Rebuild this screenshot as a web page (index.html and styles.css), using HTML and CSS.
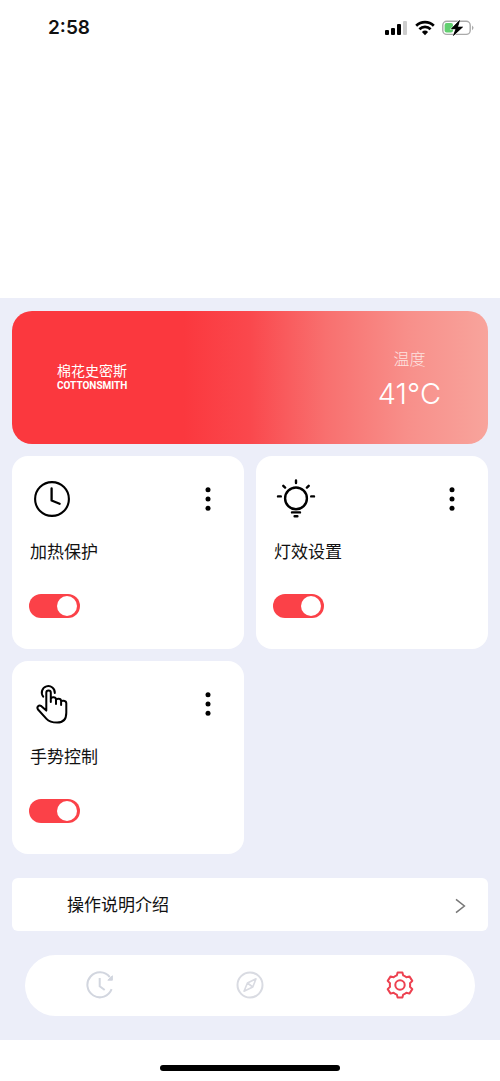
FILE: index.html
```html
<!DOCTYPE html>
<html lang="zh-CN">
<head>
<meta charset="utf-8">
<meta name="viewport" content="width=device-width, initial-scale=1">
<title>棉花史密斯</title>
<link rel="stylesheet" href="styles.css">
</head>
<body>
<header class="status">
  <time class="clock">2:58</time>
  <div class="indicators">
    <svg width="23" height="16" viewBox="0 0 23 16" aria-hidden="true"><rect x="0" y="10" width="4" height="5" rx="1"/><rect x="6" y="8" width="4" height="7" rx="1"/><rect x="12" y="4" width="4" height="11" rx="1"/><rect x="18" y="1" width="4" height="14" rx="1" fill="#ccc"/></svg>
    <svg width="20" height="16" viewBox="0 0 20 16" aria-hidden="true"><g fill="none" stroke="#000" stroke-width="2.7"><path d="M1.2 5.8a12.6 12.6 0 0 1 17.6 0"/><path d="M4.4 9.2a8 8 0 0 1 11.2 0"/></g><path d="M10 15.2l-3.1-3.3a4.5 4.5 0 0 1 6.2 0z"/></svg>
    <svg width="32" height="16" viewBox="0 0 32 16" aria-hidden="true"><rect x=".8" y="1.2" width="27.4" height="13.2" rx="4" fill="#fff" stroke="#aaa" stroke-width="1.4"/><path d="M30 5.4q3 2.4 0 4.8z" fill="#aaa"/><rect x="2.6" y="3" width="8.4" height="9.6" rx="2" fill="#62cf70"/><path d="M17.6.4L9.4 8.8h4.6l-2.6 6.8 9.2-8.6h-5z" stroke="#fff" stroke-width="1.4" paint-order="stroke"/><path d="M17.6.4L9.4 8.8h4.6l-2.6 6.8 9.2-8.6h-5z" stroke="#000" stroke-width=".6"/></svg>
  </div>
</header>

<main class="panel">
  <section class="hero">
    <div class="brand">
      <span class="brand-cn">棉花史密斯</span>
      <span class="brand-en">COTTONSMITH</span>
    </div>
    <div class="temp">
      <span class="temp-label">温度</span>
      <span class="temp-value">41°C</span>
    </div>
  </section>

  <section class="cards">
    <article class="card">
      <div class="card-top">
        <svg width="44" height="44" viewBox="0 0 44 44" fill="none" stroke="#000" aria-hidden="true"><circle cx="23" cy="22" r="16.9" stroke-width="2.1"/><path d="M22.6 11.5v12l8 3.2" stroke-width="2.3" stroke-linecap="round" stroke-linejoin="round"/></svg>
        <button class="more" type="button" aria-label="更多"><svg width="6" height="24" viewBox="0 0 6 24"><circle cx="3" cy="2.7" r="2.5"/><circle cx="3" cy="12" r="2.5"/><circle cx="3" cy="21.3" r="2.5"/></svg></button>
      </div>
      <label class="card-name" for="heat">加热保护</label>
      <input class="switch" id="heat" type="checkbox" role="switch" checked>
    </article>
    <article class="card">
      <div class="card-top">
        <svg width="44" height="44" viewBox="0 0 44 44" fill="none" stroke="#000" stroke-width="2.4" stroke-linecap="round" aria-hidden="true"><circle cx="23" cy="21.4" r="10.9"/><path d="M23 3.4v2.6M10.3 8.8l1.8 1.8M35.7 8.8l-1.8 1.8M5 19.4h2.8M38.2 19.4H41M19 35.4h8M21.6 39.2h2.8"/></svg>
        <button class="more" type="button" aria-label="更多"><svg width="6" height="24" viewBox="0 0 6 24"><circle cx="3" cy="2.7" r="2.5"/><circle cx="3" cy="12" r="2.5"/><circle cx="3" cy="21.3" r="2.5"/></svg></button>
      </div>
      <label class="card-name" for="light">灯效设置</label>
      <input class="switch" id="light" type="checkbox" role="switch" checked>
    </article>
    <article class="card">
      <div class="card-top">
        <svg width="44" height="44" viewBox="0 0 44 44" fill="none" stroke="#000" stroke-width="2" stroke-linecap="round" stroke-linejoin="round" aria-hidden="true"><path d="M14.2 14.6a6.5 6.5 0 1 1 11.6-3.6"/><path d="M17.3 28V10.8a2.2 2.2 0 0 1 4.5 0V20M21.8 17c.2-2.4 5-2.4 5.2.4V22M27 18.2c.3-2 4.9-2 5.1.6V23M32.1 19.8c.4-1.6 5-1.4 5.2 1.4v9.5c0 6.5-3.4 9.9-9.2 9.9-5 0-8.1-.9-10.6-3.7L9 27.5c-1.7-2.7.8-5 3.4-3.3l4.9 4.4"/></svg>
        <button class="more" type="button" aria-label="更多"><svg width="6" height="24" viewBox="0 0 6 24"><circle cx="3" cy="2.7" r="2.5"/><circle cx="3" cy="12" r="2.5"/><circle cx="3" cy="21.3" r="2.5"/></svg></button>
      </div>
      <label class="card-name" for="gesture">手势控制</label>
      <input class="switch" id="gesture" type="checkbox" role="switch" checked>
    </article>
  </section>

  <a class="guide" href="#guide">操作说明介绍
    <svg width="11" height="16" viewBox="0 0 11 16" fill="none" stroke="#777" stroke-width="1.5" aria-hidden="true"><path d="M1 1.4L9.4 8 1 14.6"/></svg>
  </a>

  <nav class="tabs">
    <a class="tab" href="#timer" aria-label="定时"><svg width="28" height="28" viewBox="0 0 28 28" fill="none" stroke="#d2d6df" stroke-width="2"><path d="M25.6 18.2A12.5 12.5 0 1 1 23.8 6.2"/><path d="M26.4 4.8v4.4h-4.6z" fill="#d2d6df" stroke-width="1"/><path d="M13.7 7v8.2l5 3.8"/></svg></a>
    <a class="tab" href="#explore" aria-label="探索"><svg width="28" height="28" viewBox="0 0 28 28" fill="none" stroke="#d9dbe2" stroke-width="2"><circle cx="14" cy="14" r="12.5"/><path d="M20 7.8L16.8 16 8 20.2 11.4 12zM11.4 12l5.4 4" stroke-width="1.6" stroke-linejoin="round"/></svg></a>
    <a class="tab" href="#settings" aria-label="设置" aria-current="page"><svg width="28" height="28" viewBox="-14 -14 28 28" fill="none" stroke="#ed4150" stroke-width="2" stroke-linejoin="round"><path d="M-2.4-12.5H2.4L3.2-9.6Q4.8-9 6.4-7.8L9.4-8.6 12.3-4.1 10-1.8Q10.3 0 10 1.8L12.3 4.1 9.4 8.6 6.4 7.8Q4.8 9 3.2 9.6L2.4 12.5H-2.4L-3.2 9.6Q-4.8 9-6.4 7.8L-9.4 8.6-12.3 4.1-10 1.8Q-10.3 0-10-1.8L-12.3-4.1-9.4-8.6-6.4-7.8Q-4.8-9-3.2-9.6Z"/><circle r="4.7"/></svg></a>
  </nav>
</main>

<footer class="home"><span class="home-bar"></span></footer>
</body>
</html>
```
FILE: styles.css
```css
* { box-sizing: border-box; }

body {
  margin: 0;
  background: #fff;
  color: #111;
  font-family: "Liberation Sans", "Noto Sans CJK SC", sans-serif;
  font-size: 17px;
  line-height: 24px;
}

svg { display: block; flex: none; }

.status {
  display: flex;
  justify-content: space-between;
  align-items: center;
  padding: 16px 26px 0 48px;
  margin-bottom: 258px;
}

.clock {
  font-family: Inter, sans-serif;
  font-size: 19px;
  font-weight: 600;
}

.indicators { display: flex; align-items: center; gap: 7px; }

.panel {
  background: #eceef9;
  padding: 13px 12px 24px;
}

.hero {
  display: flex;
  justify-content: space-between;
  align-items: center;
  min-height: 133px;
  padding: 0 47px 0 45px;
  border-radius: 20px;
  background: linear-gradient(90deg, #fb383e 0%, #fb383e 36%, #fa484d 50%, #f8706f 66%, #f88f8a 83%, #f8a49c 100%);
  color: #fff;
}

.brand { display: flex; flex-direction: column; }
.brand-cn { font-size: 14px; line-height: 16px; }
.brand-en {
  font-family: Roboto, sans-serif;
  font-size: 10px;
  font-weight: 700;
  line-height: 14px;
}

.temp {
  display: flex;
  flex-direction: column;
  align-items: center;
  padding-top: 8px;
}
.temp-label { font-size: 16px; font-weight: 300; color: #fde3e0; }
.temp-value {
  font-family: Inter, sans-serif;
  font-size: 29px;
  font-weight: 300;
  line-height: 44px;
}

.cards {
  display: grid;
  grid-template-columns: 1fr 1fr;
  gap: 12px;
  margin-top: 12px;
}

.card {
  display: flex;
  flex-direction: column;
  align-items: flex-start;
  padding: 21px 17px 31px;
  border-radius: 16px;
  background: #fff;
}

.card-top {
  display: flex;
  align-self: stretch;
  justify-content: space-between;
  align-items: center;
}

.more {
  padding: 0 16px;
  border: 0;
  background: none;
}

.card-name { margin: 20px 1px 29px; }

.switch {
  appearance: none;
  display: flex;
  width: 51px;
  height: 24px;
  margin: 0;
  padding: 2px 3px;
  border-radius: 12px;
  background: #ddd;
}
.switch::before {
  content: "";
  width: 20px;
  height: 20px;
  border-radius: 50%;
  background: #fff;
}
.switch:checked { justify-content: flex-end; background: #fb4148; }

.guide {
  display: flex;
  justify-content: space-between;
  align-items: center;
  margin-top: 24px;
  padding: 16px 22px 13px 55px;
  border-radius: 6px;
  background: #fff;
  color: inherit;
  text-decoration: none;
}

.tabs {
  display: grid;
  grid-template-columns: repeat(3, 1fr);
  margin: 24px 13px 0;
  padding: 16px 0 17px;
  border-radius: 31px;
  background: #fff;
}
.tab { display: flex; justify-content: center; }

.home {
  display: flex;
  justify-content: center;
  padding: 25px 0 10px;
}
.home-bar {
  width: 36%;
  height: 6px;
  border-radius: 3px;
  background: #000;
}
```
